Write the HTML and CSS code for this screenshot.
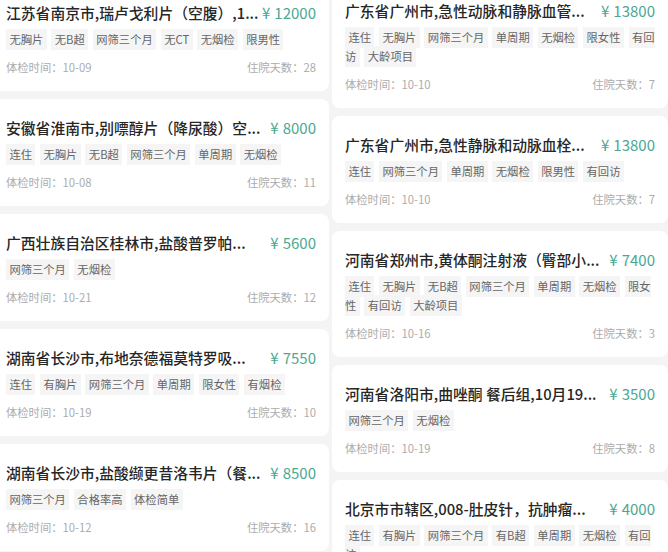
FILE: index.html
```html
<!DOCTYPE html>
<html lang="zh-CN">
<head>
<meta charset="utf-8">
<title>项目列表</title>
<link rel="stylesheet" href="styles.css">
</head>
<body>
<div class="board">
  <div class="col col-left">
    <div class="card">
      <div class="head"><div class="title">江苏省南京市,瑞卢戈利片（空腹）,1...</div><div class="price"><span class="yen">¥</span>12000</div></div>
      <div class="tags"><span class="tag">无胸片</span><span class="tag">无B超</span><span class="tag">网筛三个月</span><span class="tag">无CT</span><span class="tag">无烟检</span><span class="tag">限男性</span></div>
      <div class="meta"><span>体检时间：10-09</span><span>住院天数：28</span></div>
    </div>
    <div class="card">
      <div class="head"><div class="title">安徽省淮南市,别嘌醇片（降尿酸）空...</div><div class="price"><span class="yen">¥</span>8000</div></div>
      <div class="tags"><span class="tag">连住</span><span class="tag">无胸片</span><span class="tag">无B超</span><span class="tag">网筛三个月</span><span class="tag">单周期</span><span class="tag">无烟检</span></div>
      <div class="meta"><span>体检时间：10-08</span><span>住院天数：11</span></div>
    </div>
    <div class="card">
      <div class="head"><div class="title">广西壮族自治区桂林市,盐酸普罗帕...</div><div class="price"><span class="yen">¥</span>5600</div></div>
      <div class="tags"><span class="tag">网筛三个月</span><span class="tag">无烟检</span></div>
      <div class="meta"><span>体检时间：10-21</span><span>住院天数：12</span></div>
    </div>
    <div class="card">
      <div class="head"><div class="title">湖南省长沙市,布地奈德福莫特罗吸...</div><div class="price"><span class="yen">¥</span>7550</div></div>
      <div class="tags"><span class="tag">连住</span><span class="tag">有胸片</span><span class="tag">网筛三个月</span><span class="tag">单周期</span><span class="tag">限女性</span><span class="tag">有烟检</span></div>
      <div class="meta"><span>体检时间：10-19</span><span>住院天数：10</span></div>
    </div>
    <div class="card">
      <div class="head"><div class="title">湖南省长沙市,盐酸缬更昔洛韦片（餐...</div><div class="price"><span class="yen">¥</span>8500</div></div>
      <div class="tags"><span class="tag">网筛三个月</span><span class="tag">合格率高</span><span class="tag">体检简单</span></div>
      <div class="meta"><span>体检时间：10-12</span><span>住院天数：16</span></div>
    </div>
  </div>
  <div class="col col-right">
    <div class="card">
      <div class="head"><div class="title">广东省广州市,急性动脉和静脉血管...</div><div class="price"><span class="yen">¥</span>13800</div></div>
      <div class="tags"><span class="tag">连住</span><span class="tag">无胸片</span><span class="tag">网筛三个月</span><span class="tag">单周期</span><span class="tag">无烟检</span><span class="tag">限女性</span><span class="tag">有回访</span><span class="tag">大龄项目</span></div>
      <div class="meta"><span>体检时间：10-10</span><span>住院天数：7</span></div>
    </div>
    <div class="card">
      <div class="head"><div class="title">广东省广州市,急性静脉和动脉血栓...</div><div class="price"><span class="yen">¥</span>13800</div></div>
      <div class="tags"><span class="tag">连住</span><span class="tag">网筛三个月</span><span class="tag">单周期</span><span class="tag">无烟检</span><span class="tag">限男性</span><span class="tag">有回访</span></div>
      <div class="meta"><span>体检时间：10-10</span><span>住院天数：7</span></div>
    </div>
    <div class="card">
      <div class="head"><div class="title">河南省郑州市,黄体酮注射液（臀部小...</div><div class="price"><span class="yen">¥</span>7400</div></div>
      <div class="tags"><span class="tag">连住</span><span class="tag">无胸片</span><span class="tag">无B超</span><span class="tag">网筛三个月</span><span class="tag">单周期</span><span class="tag">无烟检</span><span class="tag">限女性</span><span class="tag">有回访</span><span class="tag">大龄项目</span></div>
      <div class="meta"><span>体检时间：10-16</span><span>住院天数：3</span></div>
    </div>
    <div class="card">
      <div class="head"><div class="title">河南省洛阳市,曲唑酮 餐后组,10月19...</div><div class="price"><span class="yen">¥</span>3500</div></div>
      <div class="tags"><span class="tag">网筛三个月</span><span class="tag">无烟检</span></div>
      <div class="meta"><span>体检时间：10-19</span><span>住院天数：8</span></div>
    </div>
    <div class="card">
      <div class="head"><div class="title">北京市市辖区,008-肚皮针，抗肿瘤...</div><div class="price"><span class="yen">¥</span>4000</div></div>
      <div class="tags"><span class="tag">连住</span><span class="tag">有胸片</span><span class="tag">网筛三个月</span><span class="tag">有B超</span><span class="tag">单周期</span><span class="tag">无烟检</span><span class="tag">有回访</span></div>
      <div class="meta"><span>体检时间：10-15</span><span>住院天数：5</span></div>
    </div>
  </div>
</div>
</body>
</html>
```

FILE: styles.css
```css
html, body {
  margin: 0;
  padding: 0;
}

body {
  background: #f4f4f4;
  font-family: "Noto Sans CJK SC", "Noto Sans", sans-serif;
  overflow: hidden;
  height: 552px;
}

.board {
  display: flex;
  align-items: flex-start;
  gap: 3px;
  margin-left: -7px;
}

.col {
  flex: none;
  width: 336px;
  display: flex;
  flex-direction: column;
  gap: 8px;
}

.col-left {
  margin-top: -16px;
}

.col-right {
  margin-top: -18px;
}

.card {
  background: #ffffff;
  border-radius: 8px;
  padding: 18px 13px 16px;
}

.head {
  display: flex;
  align-items: center;
  height: 22px;
}

.title {
  flex: 1;
  min-width: 0;
  white-space: nowrap;
  font-size: 14.8px;
  font-weight: 500;
  color: #262626;
  line-height: 22px;
}

.price {
  flex: none;
  margin-left: 6px;
  font-size: 15px;
  color: #4aa893;
  line-height: 22px;
}

.yen {
  margin-right: 4px;
}

.tags {
  margin-top: 6.5px;
  font-size: 11.3px;
  line-height: 19px;
  color: #666666;
}

.tag {
  background: #f5f5f5;
  padding: 2.4px 3.4px;
  margin-right: 4.7px;
}

.meta {
  margin-top: 9.5px;
  display: flex;
  justify-content: space-between;
  font-size: 11.3px;
  line-height: 16px;
  color: #acacac;
}
```
